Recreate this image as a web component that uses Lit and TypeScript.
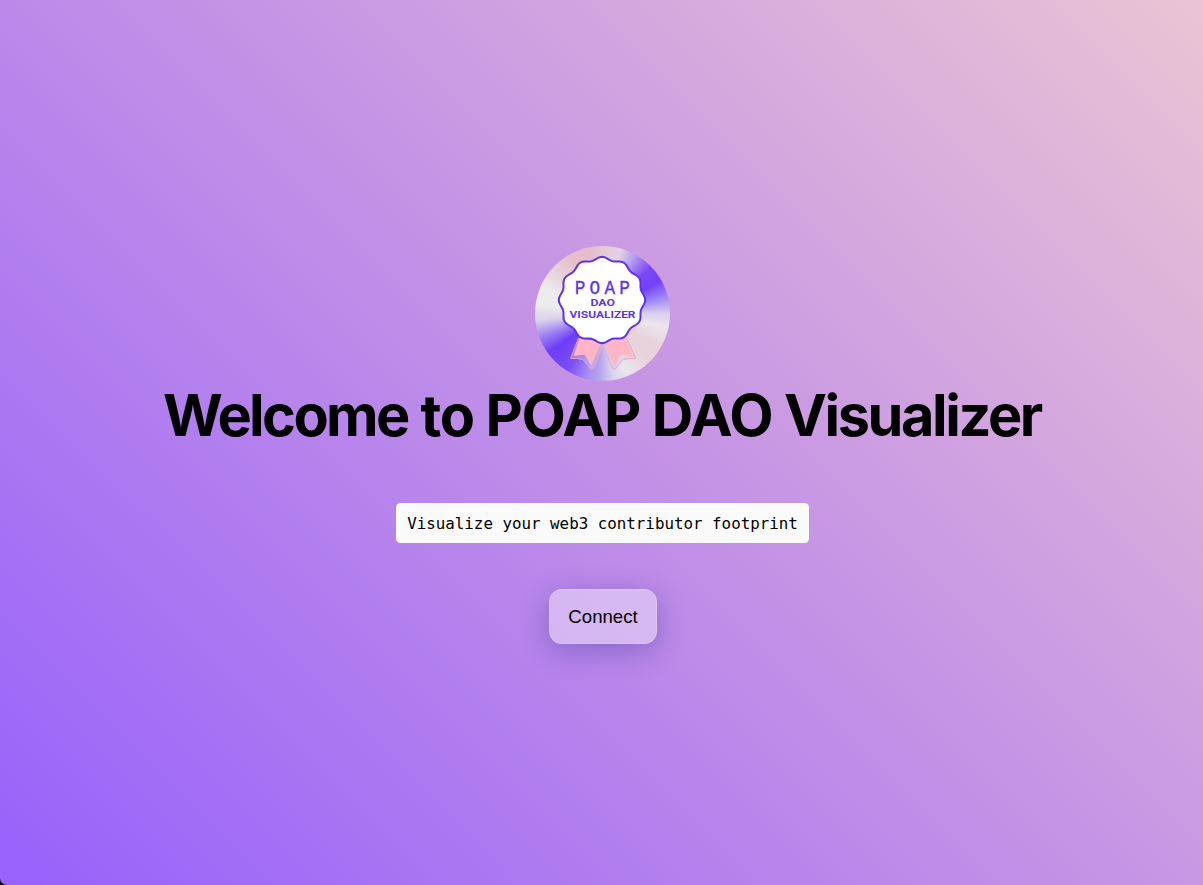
import { LitElement, html, css, svg } from "lit";
import { customElement } from "lit/decorators.js";

/** Closed outline of the twelve-lobed rosette, centred on (cx, cy). */
function rosette(cx: number, cy: number, radius: number, depth: number): string {
  const points: string[] = [];
  for (let deg = 0; deg < 360; deg += 3) {
    const a = (deg * Math.PI) / 180;
    const r = radius + depth * Math.cos(12 * a);
    points.push(`${(cx + r * Math.cos(a)).toFixed(2)} ${(cy + r * Math.sin(a)).toFixed(2)}`);
  }
  return `M${points.join("L")}Z`;
}

@customElement("poap-badge")
export class PoapBadge extends LitElement {
  static styles = css`
    :host {
      display: block;
      width: 135px;
      height: 135px;
      border-radius: 50%;
      overflow: hidden;
      background: conic-gradient(
        from 0deg,
        #e6c8d4 0deg,
        #e2d3e6 16deg,
        #b9a2f0 28deg,
        #7a49f6 46deg,
        #7340f7 60deg,
        #a08af2 76deg,
        #d8d0ee 90deg,
        #ebe6ec 102deg,
        #e8d2dc 120deg,
        #e8d2dc 136deg,
        #eae6ec 158deg,
        #dcd6ec 170deg,
        #b5a8ee 182deg,
        #a58cf2 194deg,
        #7a4cf6 212deg,
        #6f3df7 234deg,
        #9a7cf3 248deg,
        #dad2ee 264deg,
        #ececec 278deg,
        #ececec 294deg,
        #e8d4dc 310deg,
        #e7bfcc 330deg,
        #e6bccb 348deg,
        #e6c8d4 360deg
      );
    }
    svg {
      display: block;
    }
    .name {
      font: 21px "Liberation Mono", monospace;
    }
    .small {
      font: bold 9.2px "Roboto", sans-serif;
    }
  `;

  render() {
    return html`<svg width="135" height="135" viewBox="0 0 135 135" role="img">
      ${svg`
        <g fill="#d9bde6" fill-opacity=".45" stroke="#f0a8bd" stroke-width="1" stroke-linejoin="round">
          <path d="M43.5 92 L35.5 112.5 Q42 112 47.5 113.5 Q52 118 56.5 123.5 L58.5 122.5 L68 98 Z" />
          <path d="M91.5 92 L101 112.5 Q94 112 88.5 113.5 Q84 118 80 123.5 L77.5 122.5 L67 98 Z" />
        </g>
        <g fill="#ffb5c3">
          <path d="M44.5 92 L38.5 110 L49.5 108.5 L56.3 119.5 L66.5 96 Z" />
          <path d="M90.5 92 L97.5 110 L85.7 108.5 L79.5 119.5 L68.5 96 Z" />
        </g>
        <path d=${rosette(67, 54, 41.7, 1.5)} fill="#fff" stroke="#5f32ea" stroke-width="2" />
        <g fill="#5c35ea">
          <text class="name" transform="translate(0 48) scale(.84 1)" x="47.3 65 82.8 100.2" y="0" stroke="#5c35ea" stroke-width=".4">POAP</text>
          <text class="small" x="55.5" y="60.4" textLength="24.5" lengthAdjust="spacingAndGlyphs">DAO</text>
          <text class="small" x="34.5" y="72" textLength="66" lengthAdjust="spacingAndGlyphs">VISUALIZER</text>
        </g>
      `}
    </svg>`;
  }
}

@customElement("app-root")
export class AppRoot extends LitElement {
  static styles = css`
    :host {
      display: block;
      background: #000;
    }
    .page {
      box-sizing: border-box;
      min-height: 885px;
      padding: 246px 0 0 2px;
      display: flex;
      flex-direction: column;
      align-items: center;
      overflow: hidden;
      color: #000;
      border-bottom-left-radius: 7px;
      background: linear-gradient(45deg, #9761fb 0%, #c594e5 54%, #ebc4d4 100%);
    }
    .title {
      display: flex;
      gap: 11.6px;
      margin: 0 1px 0 0;
      padding-top: 1px;
      font: 700 57.6px/66px "Inter", sans-serif;
      letter-spacing: -1.2px;
      white-space: nowrap;
    }
    .title .first {
      letter-spacing: -2.6px;
      margin-right: 1px;
    }
    .title .last {
      letter-spacing: -2.4px;
    }
    .tagline {
      box-sizing: border-box;
      margin: 55px 0 46px;
      width: 413px;
      height: 40px;
      border-radius: 4.5px;
      background: #fafafa;
      text-align: center;
      white-space: nowrap;
      font: 15.84px/41px "DejaVu Sans Mono", monospace;
    }
    .connect {
      box-sizing: border-box;
      width: 108px;
      height: 55px;
      margin-left: 1px;
      padding: 1px 0 0;
      border: 1px solid rgba(255, 255, 255, 0.18);
      border-radius: 13px;
      background: rgba(255, 255, 255, 0.4);
      box-shadow: 0 7px 29px rgba(31, 38, 135, 0.33);
      color: #000;
      font: 18.6px/52px "Liberation Sans", Arial, sans-serif;
    }
  `;

  render() {
    return html`
      <main class="page">
        <poap-badge></poap-badge>
        <h1 class="title">
          <span class="first">Welcome</span>
          <span>to</span>
          <span>POAP</span>
          <span>DAO</span>
          <span class="last">Visualizer</span>
        </h1>
        <code class="tagline">Visualize your web3 contributor footprint</code>
        <button class="connect">Connect</button>
      </main>
    `;
  }
}
